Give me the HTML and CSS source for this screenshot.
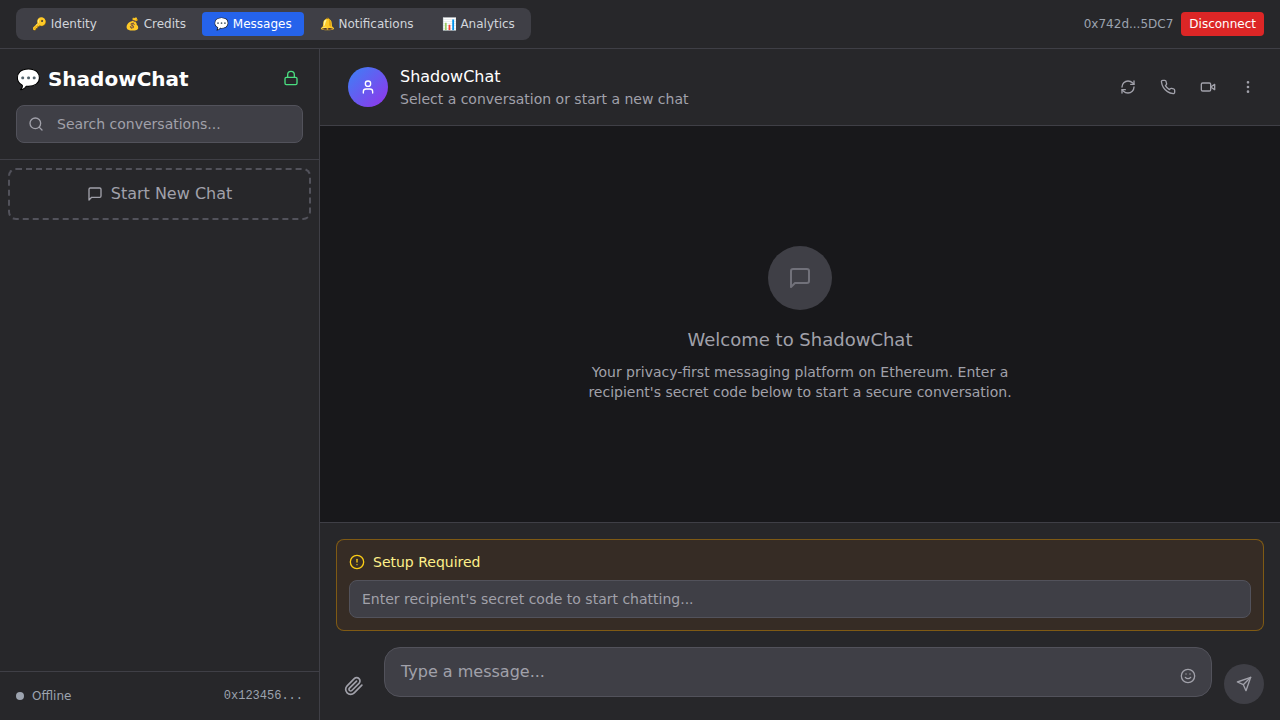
FILE: index.html
```html
<!DOCTYPE html>
<html lang="en">
<head>
<meta charset="utf-8">
<title>ShadowChat</title>
<link rel="stylesheet" href="styles.css">
</head>
<body>
<header class="topbar">
  <nav class="tabs">
    <button class="tab">🔑 Identity</button>
    <button class="tab">💰 Credits</button>
    <button class="tab active">💬 Messages</button>
    <button class="tab">🔔 Notifications</button>
    <button class="tab">📊 Analytics</button>
  </nav>
  <div class="wallet">
    <span class="addr">0x742d...5DC7</span>
    <button class="disconnect">Disconnect</button>
  </div>
</header>
<div class="app">
  <aside class="sidebar">
    <div class="side-head">
      <div class="title-row">
        <h1 class="title">💬 ShadowChat</h1>
        <svg class="ico lock" viewBox="0 0 24 24"><rect x="3" y="11" width="18" height="11" rx="2"/><path d="M7 11V7a5 5 0 0 1 10 0v4"/></svg>
      </div>
      <div class="search">
        <svg class="ico s16" viewBox="0 0 24 24"><circle cx="11" cy="11" r="8"/><path d="m21 21-4.3-4.3"/></svg>
        <span>Search conversations...</span>
      </div>
    </div>
    <div class="side-list">
      <button class="new-chat">
        <svg class="ico s16" viewBox="0 0 24 24"><path d="M21 15a2 2 0 0 1-2 2H7l-4 4V5a2 2 0 0 1 2-2h14a2 2 0 0 1 2 2z"/></svg>
        <span class="lift">Start New Chat</span>
      </button>
    </div>
    <div class="side-foot">
      <div class="status"><i class="dot"></i><span>Offline</span></div>
      <span class="mono">0x123456...</span>
    </div>
  </aside>
  <main class="chat">
    <div class="chat-head">
      <div class="avatar">
        <svg class="ico s16 white" viewBox="0 0 24 24"><path d="M19 21v-2a4 4 0 0 0-4-4H9a4 4 0 0 0-4 4v2"/><circle cx="12" cy="7" r="4"/></svg>
      </div>
      <div class="head-text">
        <div class="head-name">ShadowChat</div>
        <div class="head-sub">Select a conversation or start a new chat</div>
      </div>
      <div class="actions">
        <button class="act"><svg class="ico s16" viewBox="0 0 24 24"><path d="M3 12a9 9 0 0 1 9-9 9.75 9.75 0 0 1 6.74 2.74L21 8"/><path d="M21 3v5h-5"/><path d="M21 12a9 9 0 0 1-9 9 9.75 9.75 0 0 1-6.74-2.74L3 16"/><path d="M8 16H3v5"/></svg></button>
        <button class="act"><svg class="ico s16" viewBox="0 0 24 24"><path d="M22 16.92v3a2 2 0 0 1-2.18 2 19.79 19.79 0 0 1-8.63-3.07 19.5 19.5 0 0 1-6-6 19.79 19.79 0 0 1-3.07-8.67A2 2 0 0 1 4.11 2h3a2 2 0 0 1 2 1.72 12.84 12.84 0 0 0 .7 2.81 2 2 0 0 1-.45 2.11L8.09 9.91a16 16 0 0 0 6 6l1.27-1.27a2 2 0 0 1 2.11-.45 12.84 12.84 0 0 0 2.81.7A2 2 0 0 1 22 16.92z"/></svg></button>
        <button class="act"><svg class="ico s16" viewBox="0 0 24 24"><path d="m22 8-6 4 6 4V8z"/><rect x="2" y="6" width="14" height="12" rx="2"/></svg></button>
        <button class="act"><svg class="ico s16" viewBox="0 0 24 24"><circle cx="12" cy="12" r="1"/><circle cx="12" cy="5" r="1"/><circle cx="12" cy="19" r="1"/></svg></button>
      </div>
    </div>
    <section class="messages">
      <div class="empty-icon">
        <svg class="ico s24" viewBox="0 0 24 24"><path d="M21 15a2 2 0 0 1-2 2H7l-4 4V5a2 2 0 0 1 2-2h14a2 2 0 0 1 2 2z"/></svg>
      </div>
      <h2 class="welcome">Welcome to ShadowChat</h2>
      <p class="blurb">Your privacy-first messaging platform on Ethereum. Enter a recipient's secret code below to start a secure conversation.</p>
    </section>
    <div class="composer">
      <div class="setup">
        <div class="setup-title">
          <svg class="ico s16 amber" viewBox="0 0 24 24"><circle cx="12" cy="12" r="10"/><path d="M12 8v4"/><path d="M12 16h.01"/></svg>
          <span>Setup Required</span>
        </div>
        <div class="code-input">Enter recipient's secret code to start chatting...</div>
      </div>
      <div class="input-row">
        <button class="attach"><svg class="ico s20" viewBox="0 0 24 24"><path d="m21.44 11.05-9.19 9.19a6 6 0 0 1-8.49-8.49l8.57-8.57A4 4 0 1 1 18 8.84l-8.59 8.57a2 2 0 0 1-2.83-2.83l8.49-8.48"/></svg></button>
        <div class="msg-input">
          <span class="lift">Type a message...</span>
          <svg class="ico s16 smile" viewBox="0 0 24 24"><circle cx="12" cy="12" r="10"/><path d="M8 14s1.5 2 4 2 4-2 4-2"/><path d="M9 9h.01"/><path d="M15 9h.01"/></svg>
        </div>
        <button class="send"><svg class="ico s16" viewBox="0 0 24 24"><path d="m22 2-7 20-4-9-9-4Z"/><path d="M22 2 11 13"/></svg></button>
      </div>
    </div>
  </main>
</div>
</body>
</html>
```
FILE: styles.css
```css
* { box-sizing: border-box; margin: 0; padding: 0; }
html, body { width: 1280px; height: 720px; overflow: hidden; }
body {
  background: #18181b;
  color: #fff;
  font-family: "DejaVu Sans", sans-serif;
  display: flex;
  flex-direction: column;
}
button { font-family: inherit; border: none; background: none; color: inherit; }

.ico { fill: none; stroke: currentColor; stroke-width: 2; stroke-linecap: round; stroke-linejoin: round; display: block; flex: none; }
.s16 { width: 16px; height: 16px; }
.s20 { width: 20px; height: 20px; }
.s24 { width: 24px; height: 24px; }
.lift { padding-bottom: 2px; }

.topbar {
  height: 49px;
  flex: none;
  background: #27272a;
  border-bottom: 1px solid #3f3f46;
  padding: 0 16px;
  display: flex;
  align-items: center;
  justify-content: space-between;
}
.tabs { display: flex; gap: 4px; padding: 4px; background: #3f3f46; border-radius: 8px; }
.tab { height: 24px; padding: 0 12px; font-size: 12px; line-height: 24px; color: #d1d5db; border-radius: 4px; }
.tab.active { background: #2563eb; color: #fff; }
.wallet { display: flex; align-items: center; gap: 8px; }
.addr { font-size: 12px; color: #9ca3af; }
.disconnect { height: 24px; padding: 0 8px; font-size: 12px; background: #dc2626; color: #fff; border-radius: 4px; }

.app { flex: 1; display: flex; min-height: 0; }

.sidebar {
  width: 320px;
  flex: none;
  background: #27272a;
  border-right: 1px solid #3f3f46;
  display: flex;
  flex-direction: column;
}
.side-head { padding: 16px; border-bottom: 1px solid #3f3f46; }
.title-row { display: flex; align-items: center; justify-content: space-between; margin-bottom: 12px; padding-right: 4px; height: 28px; }
.title { font-size: 20px; font-weight: 700; line-height: 28px; }
.lock { width: 16px; height: 16px; color: #4ade80; margin-bottom: 2px; }
.search {
  height: 38px;
  display: flex;
  align-items: center;
  gap: 13px;
  padding: 0 11px;
  background: #3f3f46;
  border: 1px solid #52525b;
  border-radius: 8px;
  font-size: 14px;
  color: #a1a1aa;
}
.side-list { flex: 1; padding: 8px; }
.new-chat {
  width: 100%;
  height: 52px;
  display: flex;
  align-items: center;
  justify-content: center;
  gap: 8px;
  border: 2px dashed #52525b;
  border-radius: 8px;
  font-size: 16px;
  color: #a1a1aa;
}
.side-foot {
  height: 49px;
  flex: none;
  padding: 0 16px;
  border-top: 1px solid #3f3f46;
  display: flex;
  align-items: center;
  justify-content: space-between;
  font-size: 12px;
  color: #9ca3af;
}
.status { display: flex; align-items: center; gap: 8px; }
.dot { width: 8px; height: 8px; border-radius: 50%; background: #9ca3af; }
.mono { font-family: "Liberation Mono", monospace; }

.chat { flex: 1; min-width: 0; display: flex; flex-direction: column; }
.chat-head {
  height: 77px;
  flex: none;
  background: #27272a;
  border-bottom: 1px solid #3f3f46;
  padding: 0 16px 0 28px;
  display: flex;
  align-items: center;
  gap: 12px;
}
.avatar {
  width: 40px;
  height: 40px;
  border-radius: 50%;
  background: linear-gradient(135deg, #3b82f6, #9333ea);
  display: flex;
  align-items: center;
  justify-content: center;
}
.white { color: #fff; }
.head-text { flex: 1; }
.head-name { font-size: 16px; line-height: 24px; color: #fff; }
.head-sub { font-size: 14px; line-height: 20px; color: #a1a1aa; }
.actions { display: flex; gap: 8px; }
.act { width: 32px; height: 32px; display: flex; align-items: center; justify-content: center; color: #a1a1aa; }

.messages {
  flex: 1;
  min-height: 0;
  display: flex;
  flex-direction: column;
  align-items: center;
  padding-top: 120px;
}
.empty-icon {
  width: 64px;
  height: 64px;
  border-radius: 50%;
  background: #3f3f46;
  display: flex;
  align-items: center;
  justify-content: center;
  color: #71717a;
  margin-bottom: 16px;
}
.welcome { font-size: 18px; line-height: 28px; font-weight: 400; color: #a1a1aa; margin-bottom: 8px; }
.blurb { width: 448px; font-size: 14px; line-height: 20px; color: #a1a1aa; text-align: center; }

.composer {
  height: 198px;
  flex: none;
  background: #27272a;
  border-top: 1px solid #3f3f46;
  padding: 16px;
}
.setup {
  height: 92px;
  padding: 12px;
  background: rgba(113, 63, 18, 0.2);
  border: 1px solid rgba(202, 138, 4, 0.5);
  border-radius: 8px;
  margin-bottom: 16px;
}
.setup-title { display: flex; align-items: center; gap: 8px; font-size: 14px; line-height: 20px; color: #fef08a; margin-bottom: 8px; }
.amber { color: #facc15; }
.code-input {
  height: 38px;
  padding: 0 12px;
  display: flex;
  align-items: center;
  background: #3f3f46;
  border: 1px solid #52525b;
  border-radius: 8px;
  font-size: 14px;
  color: #a1a1aa;
}
.input-row { display: flex; align-items: flex-end; gap: 12px; }
.attach { width: 36px; height: 36px; display: flex; align-items: center; justify-content: center; color: #a1a1aa; }
.msg-input {
  flex: 1;
  height: 50px;
  padding: 0 16px;
  margin-bottom: 7px;
  display: flex;
  align-items: center;
  justify-content: space-between;
  background: #3f3f46;
  border: 1px solid #52525b;
  border-radius: 16px;
  font-size: 16px;
  color: #a1a1aa;
}
.smile { margin-top: 8px; margin-right: -1px; }
.send { width: 40px; height: 40px; border-radius: 50%; background: #3f3f46; display: flex; align-items: center; justify-content: center; color: #a1a1aa; }
```
